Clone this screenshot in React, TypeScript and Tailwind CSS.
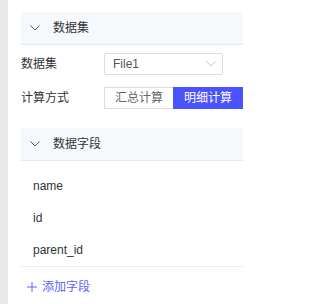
import React from 'react';

const font = { fontFamily: '"Liberation Sans", "Noto Sans CJK SC", sans-serif' };

const Chevron: React.FC<{ className?: string }> = ({ className }) => (
    <svg width="10" height="6" viewBox="0 0 10 6" className={className} fill="none">
        <path d="M0.5 0.5 L5 5 L9.5 0.5" stroke="currentColor" strokeWidth="1" />
    </svg>
);

const SectionHeader: React.FC<{ title: string }> = ({ title }) => (
    <div className="h-[33px] flex items-center pl-[9px] bg-[#f6f9fc] border-b border-[#e3e7ec]">
        <Chevron className="text-[#555]" />
        <span className="ml-[13px] text-[12px] text-[#333]">{title}</span>
    </div>
);

const App: React.FC = () => {
    const fields = ['name', 'id', 'parent_id'];
    return (
        <div className="w-[255px] h-[304px] flex bg-white overflow-hidden" style={font}>
            <div className="w-[8px] bg-[#e8e8e8] shrink-0" />
            <div className="flex-1 pl-[13px] pr-[12px] pt-[12px]">
                {/* 数据集 */}
                <SectionHeader title="数据集" />
                <div className="mt-[8px] flex items-center h-[22px]">
                    <span className="w-[83px] text-[12px] text-[#333]">数据集</span>
                    <div className="w-[119px] h-[22px] flex items-center justify-between border border-[#dcdcdc] rounded-[2px] pl-[8px] pr-[6px]">
                        <span className="text-[12px] text-[#555]">File1</span>
                        <Chevron className="text-[#c0c4cc]" />
                    </div>
                </div>
                <div className="mt-[12px] flex items-center h-[22px]">
                    <span className="w-[83px] text-[12px] text-[#333]">计算方式</span>
                    <div className="flex-1 flex h-[22px]">
                        <div className="w-[69px] flex items-center justify-center border border-[#dcdcdc] border-r-0 text-[12px] text-[#666]">汇总计算</div>
                        <div className="flex-1 flex items-center justify-center bg-[#4b53ff] text-[12px] text-white">明细计算</div>
                    </div>
                </div>

                {/* 数据字段 */}
                <div className="mt-[19px]">
                    <SectionHeader title="数据字段" />
                </div>
                <div className="pt-[9px] border-b border-[#ececec]">
                    {fields.map((f) => (
                        <div key={f} className="h-[32px] flex items-center pl-[12px] text-[12px] text-[#333]">{f}</div>
                    ))}
                </div>
                <div className="h-[40px] flex items-center pl-[6px] text-[#5a64ff]">
                    <svg width="10" height="10" viewBox="0 0 10 10" fill="none">
                        <path d="M5 0 V10 M0 5 H10" stroke="currentColor" strokeWidth="1" />
                    </svg>
                    <span className="ml-[5px] text-[12px]">添加字段</span>
                </div>
            </div>
        </div>
    );
};

export default App;
